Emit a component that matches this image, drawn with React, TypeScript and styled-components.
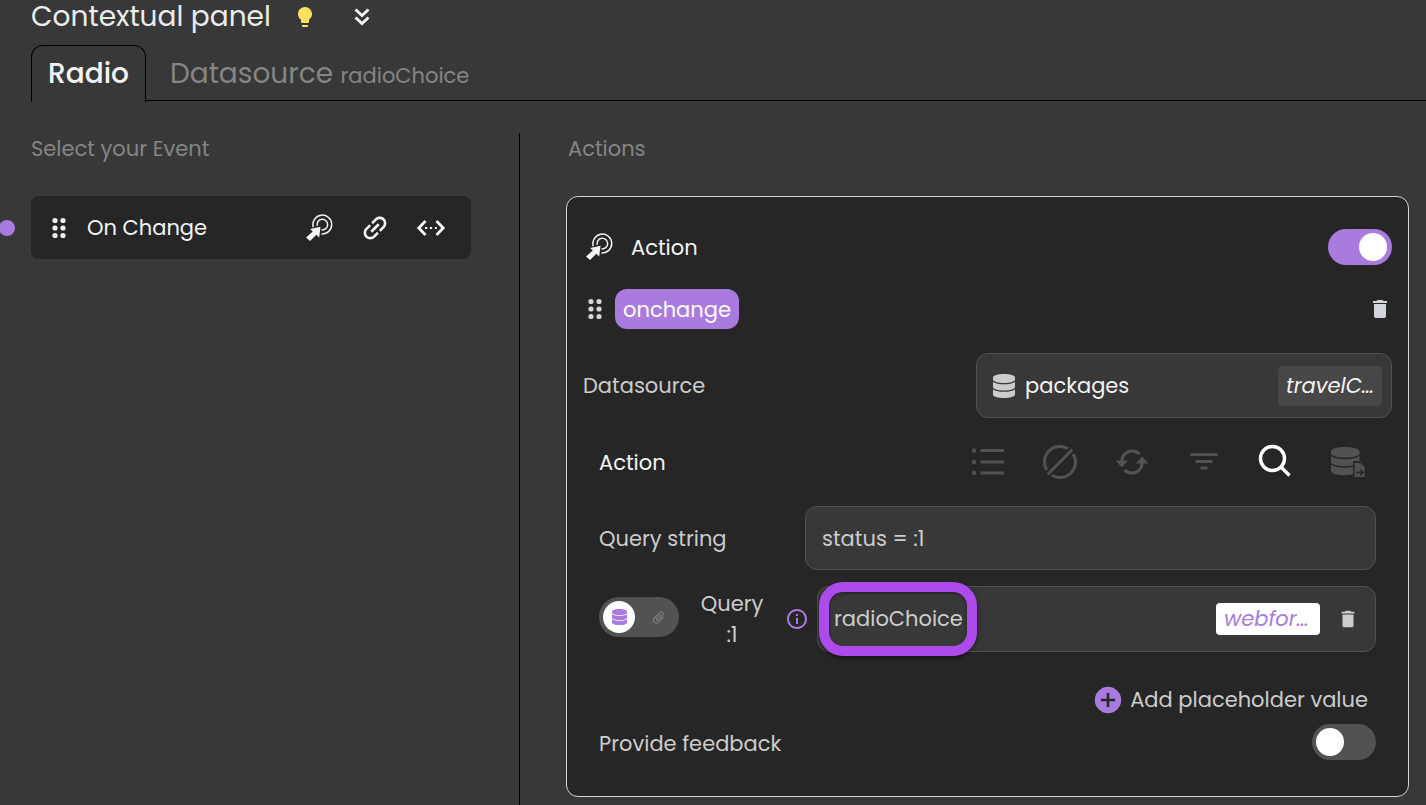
import React from 'react';
import styled, { createGlobalStyle, css } from 'styled-components';
import {
  MdLightbulb,
  MdInsertLink,
  MdDelete,
  MdAttachFile,
  MdOutlineInfo,
} from 'react-icons/md';

const GlobalStyle = createGlobalStyle`
  *, *::before, *::after { box-sizing: border-box; }
  body {
    margin: 0;
    background: #383838;
    color: #cccccc;
    font: 400 21px/32px Poppins, Inter, "Open Sans", sans-serif;
  }
  button, input { font: inherit; color: inherit; }
  h1, h2 { margin: 0; font-weight: 400; font-size: inherit; }
`;

const Page = styled.div`
  min-height: 100vh;
  display: flex;
  flex-direction: column;
`;

const Header = styled.header`
  display: flex;
  align-items: center;
  height: 34px;
  padding-left: 31px;
`;

const Title = styled.h1`
  font-size: 28px;
  color: #ececec;
  margin-right: 22px;
`;

const IconButton = styled.button<{ $color?: string }>`
  display: inline-flex;
  align-items: center;
  justify-content: center;
  flex: none;
  padding: 0;
  border: 0;
  background: none;
  cursor: pointer;
  color: ${({ $color }) => $color ?? '#f3f4f6'};
  svg { display: block; }
`;

const HeaderTools = styled.div`
  display: flex;
  align-items: center;
  gap: 32px;
`;

const Tabs = styled.nav`
  display: flex;
  margin: 11px 0 0 31px;
  height: 56px;
  border-bottom: 1px solid #000;
`;

const Tab = styled.button<{ $active?: boolean }>`
  height: 57px;
  padding: 2px 16px 0;
  border: 1px solid transparent;
  border-bottom: 0;
  border-radius: 12px 12px 0 0;
  background: none;
  color: #858585;
  font-size: 28px;
  white-space: nowrap;
  cursor: pointer;
  ${({ $active }) =>
    $active &&
    css`
      padding-top: 0;
      border-color: #000;
      background: #383838;
      color: #f3f4f6;
      font-weight: 500;
      margin-right: 7px;
    `}
  small { font-size: 21px; }
`;

const Columns = styled.main`
  flex: 1;
  display: grid;
  grid-template-columns: minmax(320px, 520px) minmax(0, 1fr);
  padding-top: 32px;
`;

const EventsColumn = styled.section`
  border-right: 1px solid #000;
  padding-right: 48px;
`;

const ActionsColumn = styled.section`
  padding: 0 17px 8px 46px;
`;

const ColumnTitle = styled.h2<{ $inset: number }>`
  color: #858585;
  padding-left: ${({ $inset }) => $inset}px;
  margin-bottom: 31px;
`;

const EventRow = styled.div`
  display: flex;
  align-items: center;
  gap: 16px;
  margin-left: -1px;
`;

const EventDot = styled.span`
  flex: none;
  width: 16px;
  height: 16px;
  border-radius: 50%;
  background: #a97bde;
`;

const EventCard = styled.div`
  flex: 1;
  display: flex;
  align-items: center;
  height: 63px;
  padding: 0 24px 0 21px;
  border-radius: 8px;
  background: #262626;
  color: #f3f4f6;
`;

const EventName = styled.span`
  flex: 1;
  padding-left: 21px;
`;

const EventTools = styled.div`
  display: flex;
  align-items: center;
  gap: 24px;
  button { width: 32px; }
`;

const ActionCard = styled.article`
  border: 1px solid #d4d4d4;
  border-radius: 12px;
  background: #262626;
  padding: 32px 16px 36px;
`;

const CardHeader = styled.div`
  display: flex;
  align-items: center;
  height: 36px;
  padding-left: 2px;
  gap: 18px;
  color: #f3f4f6;
  label { padding-top: 2px; }
`;

const Grow = styled.span`
  flex: 1;
`;

const Switch = styled.input`
  appearance: none;
  flex: none;
  width: 64px;
  height: 36px;
  margin: 0;
  padding: 4px;
  border-radius: 18px;
  background: #525252;
  display: flex;
  cursor: pointer;
  &::before {
    content: '';
    width: 28px;
    height: 28px;
    border-radius: 50%;
    background: #fff;
  }
  &:checked {
    padding-right: 5px;
    background: #a97bde;
    justify-content: flex-end;
  }
`;

const NameRow = styled.div`
  display: flex;
  align-items: center;
  justify-content: space-between;
  margin: 24px 0;
  padding-left: 5px;
  color: #d4d4d8;
`;

const NameGroup = styled.div`
  display: flex;
  align-items: center;
  gap: 13px;
`;

const Chip = styled.span`
  height: 40px;
  padding: 5px 8px 3px;
  border-radius: 12px;
  background: #a97bde;
  color: #fff;
`;

const DatasourceRow = styled.div`
  display: flex;
  align-items: center;
  justify-content: space-between;
`;

const DatasourceBox = styled.button`
  display: flex;
  align-items: center;
  gap: 10px;
  width: 416px;
  height: 65px;
  padding: 0 9px 0 16px;
  border: 1px solid #525252;
  border-radius: 12px;
  background: #383838;
  color: #f3f4f6;
  text-align: left;
  cursor: pointer;
  > svg { color: #cccccc; }
`;

const Tag = styled.span<{ $light?: boolean }>`
  flex: none;
  width: 104px;
  padding: ${({ $light }) => ($light ? '0 8px' : '4px 8px')};
  border-radius: 4px;
  background: ${({ $light }) => ($light ? '#fff' : '#474747')};
  color: ${({ $light }) => ($light ? '#a97bde' : '#f3f4f6')};
  font-style: italic;
  white-space: nowrap;
`;

const Settings = styled.div`
  padding: 0 16px;
`;

const ToolRow = styled.div`
  display: flex;
  align-items: center;
  justify-content: space-between;
  height: 88px;
  color: #f3f4f6;
`;

const ToolRowLabel = styled.span`
  padding-top: 2px;
`;

const Tools = styled.div`
  display: flex;
  gap: 36px;
  margin-right: 10px;
`;

const QueryRow = styled.div`
  display: flex;
  align-items: center;
  margin-bottom: 16px;
`;

const QueryLabel = styled.label`
  width: 206px;
  padding-top: 2px;
`;

const QueryInput = styled.input`
  flex: 1;
  min-width: 0;
  height: 64px;
  padding: 0 16px;
  border: 1px solid #525252;
  border-radius: 12px;
  background: #383838;
`;

const PlaceholderRow = styled.div`
  display: flex;
  align-items: center;
`;

const SourceToggle = styled.button`
  display: flex;
  align-items: center;
  gap: 16px;
  flex: none;
  width: 80px;
  height: 40px;
  margin-bottom: 4px;
  padding: 0 4px;
  border: 0;
  border-radius: 20px;
  background: #525252;
  color: #8a8a8a;
  cursor: pointer;
`;

const SourceKnob = styled.span`
  display: grid;
  place-items: center;
  width: 32px;
  height: 32px;
  border-radius: 50%;
  background: #fff;
  color: #a97bde;
`;

const PlaceholderLabel = styled.label`
  width: 106px;
  text-align: center;
  line-height: 31px;
  span { display: block; }
`;

const ValueBox = styled.div`
  flex: 1;
  display: flex;
  align-items: center;
  height: 66px;
  min-width: 0;
  margin-left: 8px;
  padding-right: 16px;
  border: 1px solid #525252;
  border-radius: 12px;
  background: #383838;
`;

const ValueTools = styled.div`
  display: flex;
  align-items: center;
  gap: 17px;
`;

const HighlightedValue = styled.div`
  width: 158px;
  height: 74px;
  flex: none;
  margin: -4px 0 -4px 1px;
  border: 10px solid #ad4aec;
  border-radius: 24px;
  box-shadow: 0 2px 4px rgba(0, 0, 0, 0.5), inset 0 1px 3px rgba(0, 0, 0, 0.5);
`;

const ValueInput = styled.input`
  display: block;
  width: 100%;
  height: 100%;
  padding: 0 0 2px 5px;
  border: 0;
  outline: 0;
  background: none;
`;

const AddRow = styled.div`
  display: flex;
  justify-content: flex-end;
  margin: 32px 8px 8px 0;
`;

const AddButton = styled.button`
  display: flex;
  align-items: center;
  gap: 8px;
  height: 32px;
  padding: 0;
  border: 0;
  background: none;
  cursor: pointer;
`;

const FeedbackRow = styled.div`
  display: flex;
  align-items: center;
  justify-content: space-between;
  label { padding-top: 4px; }
`;

const DragDots = () => (
  <svg width="14" height="22" viewBox="0 0 14 22" fill="currentColor">
    {[3, 11].map((x) => [3.5, 11, 18.5].map((y) => <circle key={`${x}-${y}`} cx={x} cy={y} r="2.600" />))}
  </svg>
);

const CollapseIcon = () => (
  <svg width="26" height="26" viewBox="0 0 26 26" fill="none" stroke="currentColor" strokeWidth="2.800">
    <path d="M6.500 5.500L13 11.500L19.500 5.500M6.500 13.500L13 19.500L19.500 13.500" />
  </svg>
);

const ActionIcon = () => (
  <svg width="28" height="28" viewBox="0 0 28 28" fill="none" stroke="currentColor" strokeWidth="1.500">
    <path d="M8.300 13.200A9.400 9.400 0 1 1 16.500 19.900" />
    <path d="M12.200 11.800A5.300 5.300 0 1 1 16.500 15.800" />
    <path d="M15.500 12.700L14.200 23.500L11.300 20.700L5 27L1 23.500L7.800 17.500L5.200 15Z" fill="currentColor" stroke="none" />
  </svg>
);

const CodeIcon = () => (
  <svg width="32" height="32" viewBox="0 0 32 32" fill="none" stroke="currentColor">
    <path d="M10.500 9L3.800 16L10.500 23M21.500 9L28.200 16L21.500 23" strokeWidth="2.800" />
    <path d="M10 16H12.200M14.900 16H17.100M19.800 16H22" strokeWidth="2.200" />
  </svg>
);

const DatabaseIcon = ({ width, height }: { width: number; height: number }) => (
  <svg width={width} height={height} viewBox="0 0 22 24" preserveAspectRatio="none" fill="currentColor">
    <path d="M11 0C17 0 22 1.400 22 3.500V5.500C22 7.500 17 9 11 9S0 7.500 0 5.500V3.500C0 1.400 5 0 11 0Z" />
    <path d="M0 8C2.500 9.700 6.500 10.300 11 10.300S19.500 9.700 22 8V13C22 15 17 16.500 11 16.500S0 15 0 13Z" />
    <path d="M0 15.500C2.500 17.200 6.500 17.800 11 17.800S19.500 17.200 22 15.500V20.500C22 22.600 17 24 11 24S0 22.600 0 20.500Z" />
  </svg>
);

const ListIcon = () => (
  <svg width="36" height="36" viewBox="0 0 36 36" stroke="currentColor" strokeWidth="3" fill="currentColor">
    <path d="M10.500 6.500H34M10.500 18H34M10.500 29H34" />
    {[6.5, 18, 29].map((y) => <circle key={y} cx="4" cy={y} r="2.200" stroke="none" />)}
  </svg>
);

const EmptyIcon = () => (
  <svg width="36" height="36" viewBox="0 0 36 36" fill="none" stroke="currentColor" strokeWidth="3">
    <path d="M26 4.800A15.400 15.400 0 0 0 4.800 26M10 31.200A15.400 15.400 0 0 0 31.200 10M5.800 30.200L30.200 5.800" />
  </svg>
);

const SyncIcon = () => (
  <svg width="36" height="36" viewBox="0 0 36 36" fill="none" stroke="currentColor" strokeWidth="3.200">
    <path d="M25.500 10A10.500 10.500 0 0 0 7.800 17M10.500 26A10.500 10.500 0 0 0 28.200 19" />
    <path d="M1.500 16.500H14L7.800 23.500ZM22 19.500H34.500L28.200 12.500Z" fill="currentColor" stroke="none" />
  </svg>
);

const FilterIcon = () => (
  <svg width="36" height="36" viewBox="0 0 36 36" fill="none" stroke="currentColor" strokeWidth="3.200">
    <path d="M4.500 10.500H31.500M9.500 17.500H26.500M14.500 24H21.500" />
  </svg>
);

const SearchIcon = () => (
  <svg width="36" height="36" viewBox="0 0 36 36" fill="none" stroke="currentColor" strokeWidth="3.400">
    <circle cx="14.500" cy="14.500" r="12" />
    <path d="M23 23L31.500 31.500" />
  </svg>
);

const ExportIcon = () => (
  <svg width="36" height="36" viewBox="0 0 36 36" fill="currentColor">
    <path d="M15 3C23 3 29.500 4.500 29.500 7.500V9.500C29.500 12 23 13.500 15 13.500S1 12 1 9.500V7.500C1 4.500 7 3 15 3Z" />
    <path d="M1 12C4 14.500 9 15.200 15 15.200S26 14.500 29.500 12V17H23V21.200C20 21.800 18 22 15 22C7 22 1 20.500 1 18Z" />
    <path d="M1 20.500C4 23 9 23.700 15 23.700Q20 23.700 23 23V30.500Q20 31.300 15 31.300C7 31.300 1 29.500 1 27Z" />
    <path d="M24.500 19H30.500L34.500 23V33H24.500Z" />
    <path d="M26 28.500H32.500M30 25.500L33 28.500L30 31.500" fill="none" stroke="#262626" strokeWidth="1.500" />
  </svg>
);

const AddIcon = () => (
  <svg width="28" height="28" viewBox="0 0 28 28">
    <circle cx="14" cy="14" r="13.200" fill="#a97bde" />
    <path d="M14 7V21M7 14H21" stroke="#262626" strokeWidth="2.600" />
  </svg>
);

const LinkGlyph = styled(MdInsertLink)`
  transform: rotate(-45deg);
`;

const ClipGlyph = styled(MdAttachFile)`
  transform: rotate(45deg);
`;

const tools = [
  { name: 'List', icon: <ListIcon /> },
  { name: 'Clear', icon: <EmptyIcon /> },
  { name: 'Reload', icon: <SyncIcon /> },
  { name: 'Order', icon: <FilterIcon /> },
  { name: 'Query', icon: <SearchIcon />, active: true },
  { name: 'Export', icon: <ExportIcon /> },
];

export default function App() {
  return (
    <Page>
      <GlobalStyle />
      <Header>
        <Title>Contextual panel</Title>
        <HeaderTools>
          <IconButton aria-label="Tips" $color="#fbdf5f"><MdLightbulb size={24} /></IconButton>
          <IconButton aria-label="Collapse"><CollapseIcon /></IconButton>
        </HeaderTools>
      </Header>
      <Tabs>
        <Tab $active>Radio</Tab>
        <Tab>Datasource <small>radioChoice</small></Tab>
      </Tabs>
      <Columns>
        <EventsColumn>
          <ColumnTitle $inset={31}>Select your Event</ColumnTitle>
          <EventRow>
            <EventDot />
            <EventCard>
              <DragDots />
              <EventName>On Change</EventName>
              <EventTools>
                <IconButton aria-label="Action"><ActionIcon /></IconButton>
                <IconButton aria-label="Link"><LinkGlyph size={32} /></IconButton>
                <IconButton aria-label="Code"><CodeIcon /></IconButton>
              </EventTools>
            </EventCard>
          </EventRow>
        </EventsColumn>
        <ActionsColumn>
          <ColumnTitle $inset={2}>Actions</ColumnTitle>
          <ActionCard>
            <CardHeader>
              <ActionIcon />
              <label htmlFor="enabled">Action</label>
              <Grow />
              <Switch id="enabled" type="checkbox" defaultChecked />
            </CardHeader>
            <NameRow>
              <NameGroup>
                <DragDots />
                <Chip>onchange</Chip>
              </NameGroup>
              <IconButton aria-label="Delete action" $color="#d1d5db"><MdDelete size={24} /></IconButton>
            </NameRow>
            <DatasourceRow>
              <span>Datasource</span>
              <DatasourceBox>
                <DatabaseIcon width={22} height={24} />
                <span>packages</span>
                <Grow />
                <Tag>travelC…</Tag>
              </DatasourceBox>
            </DatasourceRow>
            <Settings>
              <ToolRow>
                <ToolRowLabel>Action</ToolRowLabel>
                <Tools>
                  {tools.map(({ name, icon, active }) => (
                    <IconButton key={name} aria-label={name} $color={active ? '#fff' : '#525252'}>{icon}</IconButton>
                  ))}
                </Tools>
              </ToolRow>
              <QueryRow>
                <QueryLabel htmlFor="query">Query string</QueryLabel>
                <QueryInput id="query" defaultValue="status = :1" />
              </QueryRow>
              <PlaceholderRow>
                <SourceToggle aria-label="Value source">
                  <SourceKnob><DatabaseIcon width={15} height={16} /></SourceKnob>
                  <ClipGlyph size={15} />
                </SourceToggle>
                <PlaceholderLabel htmlFor="value">
                  <span>Query</span>
                  <span>:1</span>
                </PlaceholderLabel>
                <IconButton aria-label="Help" $color="#a97bde"><MdOutlineInfo size={24} /></IconButton>
                <ValueBox>
                  <HighlightedValue><ValueInput id="value" defaultValue="radioChoice" /></HighlightedValue>
                  <Grow />
                  <ValueTools>
                    <Tag $light>webfor…</Tag>
                    <IconButton aria-label="Delete value" $color="#cccccc"><MdDelete size={22} /></IconButton>
                  </ValueTools>
                </ValueBox>
              </PlaceholderRow>
              <AddRow>
                <AddButton><AddIcon />Add placeholder value</AddButton>
              </AddRow>
              <FeedbackRow>
                <label htmlFor="feedback">Provide feedback</label>
                <Switch id="feedback" type="checkbox" />
              </FeedbackRow>
            </Settings>
          </ActionCard>
        </ActionsColumn>
      </Columns>
    </Page>
  );
}
